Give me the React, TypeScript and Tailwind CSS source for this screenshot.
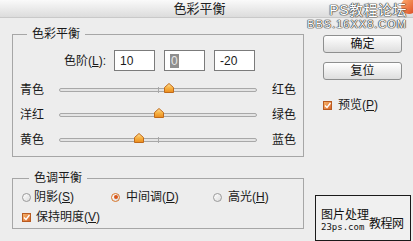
import React from "react";

const FONT = "font-['Liberation_Sans','Noto_Sans_CJK_SC',sans-serif]";

function Thumb() {
  return (
    <svg width="10" height="10" viewBox="0 0 10 10">
      <defs>
        <linearGradient id="thumbGrad" x1="0" y1="0" x2="0" y2="1">
          <stop offset="0" stopColor="#ffe2a0" />
          <stop offset="0.5" stopColor="#f7b243" />
          <stop offset="1" stopColor="#e98a1c" />
        </linearGradient>
      </defs>
      <path d="M5 0.5 L9.5 4.5 L9.5 9.5 L0.5 9.5 L0.5 4.5 Z" fill="url(#thumbGrad)" stroke="#c06a1a" strokeWidth="1" strokeLinejoin="round" />
    </svg>
  );
}

function SliderRow({ left, right, value }: { left: string; right: string; value: number }) {
  const pos = 99 + value * 0.99 - 5;
  return (
    <div className="flex h-[25px] items-center">
      <span className="w-[24px] text-[12px] leading-[14px]">{left}</span>
      <div className="relative ml-[15px] h-[4px] w-[198px] rounded-full border border-[#a8a8a8] bg-[#e4e4e4]">
        <div className="absolute left-[98px] top-[-2px] h-[6px] w-px bg-[#a8a8a8]" />
        <div className="absolute top-[-6px]" style={{ left: pos }}>
          <Thumb />
        </div>
      </div>
      <span className="ml-[15px] text-[12px] leading-[14px]">{right}</span>
    </div>
  );
}

function Radio({ checked }: { checked?: boolean }) {
  return (
    <span
      className={`flex h-[9px] w-[9px] items-center justify-center rounded-full border bg-gradient-to-br from-white to-[#dcdcdc] ${
        checked ? "border-[#d8762a]" : "border-[#9a9a9a]"
      }`}
    >
      {checked && <span className="h-[4px] w-[4px] rounded-full bg-[#d8561a]" />}
    </span>
  );
}

function Check() {
  return (
    <span className="flex h-[9px] w-[9px] items-center justify-center border border-[#b85a20] bg-gradient-to-br from-[#f6b46a] to-[#d8662a]">
      <svg width="7" height="7" viewBox="0 0 7 7">
        <path d="M1 3.5 L3 5.5 L6.5 1" fill="none" stroke="#fff" strokeWidth="1.4" />
      </svg>
    </span>
  );
}

function Button({ label }: { label: string }) {
  return (
    <button className="flex h-[18px] w-[79px] items-center justify-center rounded-[3px] border border-[#8e8f8f] bg-gradient-to-b from-white to-[#dedede] text-[12px] leading-[14px] text-[#111]">
      {label}
    </button>
  );
}

export default function App() {
  return (
    <div className={`relative h-[241px] w-[413px] overflow-hidden bg-[#ededed] text-[#1a1a1a] ${FONT}`}>
      {/* title bar */}
      <div className="flex h-[18px] items-center justify-center border-b border-[#c9c9c9] bg-gradient-to-b from-[#fafafa] to-[#dcdcdc]">
        <span className="ml-[-14px] text-[13px] leading-[16px] text-[#222]">色彩平衡</span>
      </div>

      <div className="flex pl-[12px]">
        {/* left column */}
        <div className="w-[292px]">
          <fieldset className="mt-[9px] border border-[#a6a6a6] pb-[4px] pl-[7px]">
            <legend className="ml-[7px] px-[5px] text-[12px] leading-[14px]">色彩平衡</legend>
            <div className="mt-[9px] flex items-center">
              <span className="w-[86px] text-right text-[12px] leading-[14px]">
                色阶(<span className="underline">L</span>):
              </span>
              <div className="ml-[8px] flex h-[21px] w-[41px] items-center border border-[#7b7b7b] bg-white pl-[5px] text-[12px]">10</div>
              <div className="ml-[9px] flex h-[21px] w-[41px] items-center border border-[#7b7b7b] bg-white pl-[5px] text-[12px]">
                <span className="bg-[#8f8f8f] px-[1px] leading-[14px] text-[#e8e8e8]">0</span>
              </div>
              <div className="ml-[9px] flex h-[21px] w-[41px] items-center border border-[#7b7b7b] bg-white pl-[5px] text-[12px]">-20</div>
            </div>
            <div className="mt-[6px]">
              <SliderRow left="青色" right="红色" value={10} />
              <SliderRow left="洋红" right="绿色" value={0} />
              <SliderRow left="黄色" right="蓝色" value={-20} />
            </div>
          </fieldset>

          <fieldset className="mt-[14px] border border-[#a6a6a6] pb-[3px] pl-[9px]">
            <legend className="ml-[7px] px-[5px] text-[12px] leading-[14px]">色调平衡</legend>
            <div className="mt-[4px] flex h-[16px] items-center text-[12px] leading-[14px]">
              <div className="flex w-[89px] items-center gap-[3px]">
                <Radio />
                <span>阴影(<span className="underline">S</span>)</span>
              </div>
              <div className="flex w-[102px] items-center gap-[6px]">
                <Radio checked />
                <span>中间调(<span className="underline">D</span>)</span>
              </div>
              <div className="flex items-center gap-[6px]">
                <Radio />
                <span>高光(<span className="underline">H</span>)</span>
              </div>
            </div>
            <div className="mt-[4px] flex h-[16px] items-center gap-[5px] text-[12px] leading-[14px]">
              <Check />
              <span>保持明度(<span className="underline">V</span>)</span>
            </div>
          </fieldset>
        </div>

        {/* right column */}
        <div className="ml-[19px] mt-[17px] flex flex-col">
          <Button label="确定" />
          <div className="mt-[9px]">
            <Button label="复位" />
          </div>
          <div className="mt-[18px] flex items-center gap-[6px] text-[12px] leading-[14px]">
            <Check />
            <span>预览(<span className="underline">P</span>)</span>
          </div>
        </div>
      </div>

      {/* forum watermark */}
      <div className="absolute right-[-4px] top-[-2px] h-[16px] w-[16px] rounded-full bg-gradient-to-br from-[#ffb070] to-[#d8401a]" />
      <div className="absolute right-[6px] top-[3px] flex flex-col items-end leading-none text-white [text-shadow:0_0_1px_#333,0_0_1px_#333,0_0_1px_#333,0_0_1px_#333]">
        <span className="text-[14px] leading-[15px] tracking-[0.5px]">PS教程论坛</span>
        <span className="mt-[1px] text-[11px] leading-[11px] tracking-[1px]">BBS.16XX8.COM</span>
      </div>

      {/* site watermark */}
      <div className="absolute left-[315px] top-[195px] flex h-[46px] w-[96px] items-end whitespace-nowrap border border-[#1a1a1a] bg-[#f0f0f0] pb-[7px] pl-[5px] text-[#111]">
        <div className="flex flex-col">
          <span className="text-[12px] leading-[14px]">图片处理</span>
          <span className="font-['DejaVu_Sans_Mono',monospace] text-[9px] leading-[11px]">23ps.com</span>
        </div>
        <span className="mb-[1px] text-[12px] leading-[15px] tracking-[-0.5px]">教程网</span>
      </div>
    </div>
  );
}
